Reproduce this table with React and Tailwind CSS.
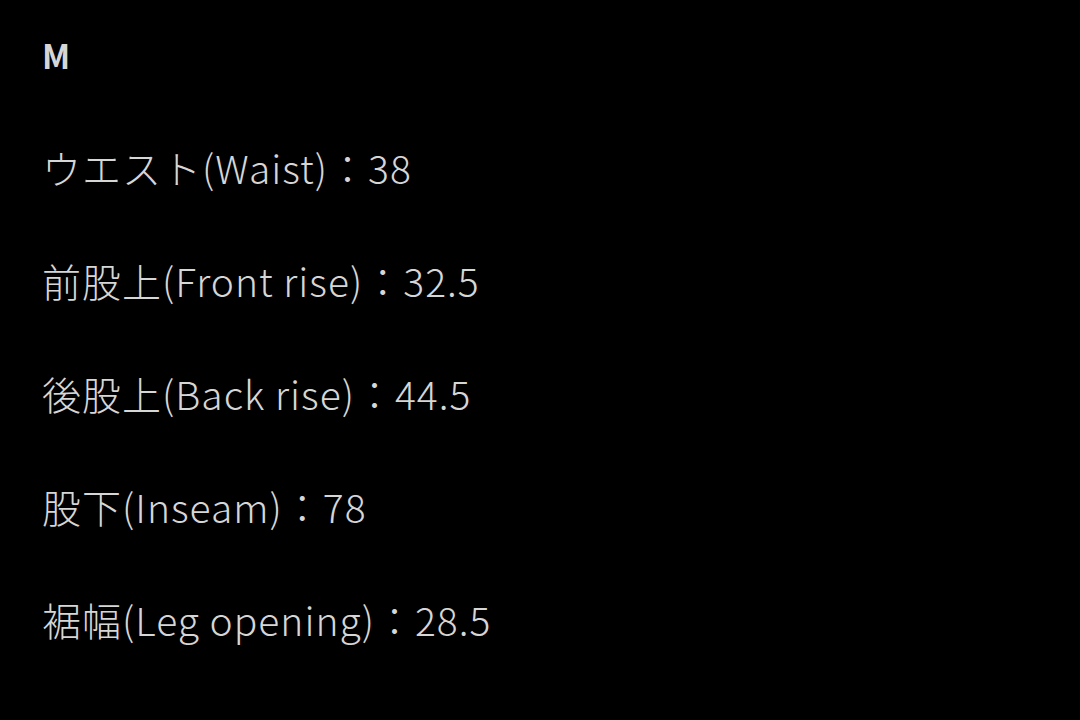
export default function App() {
  const rows = [
    "ウエスト(Waist)：38",
    "前股上(Front rise)：32.5",
    "後股上(Back rise)：44.5",
    "股下(Inseam)：78",
    "裾幅(Leg opening)：28.5",
  ];
  return (
    <div
      className="w-[1080px] h-[720px] bg-black text-[#d6d6d6] pl-[42px] overflow-hidden"
      style={{ fontFamily: '"Noto Sans CJK JP", "Noto Sans", sans-serif' }}
    >
      <div className="h-[111px] flex items-center text-[33px] font-bold">M</div>
      {rows.map((r) => (
        <div key={r} className="h-[113px] flex items-center text-[39px] font-light tracking-[1px] whitespace-nowrap">
          {r}
        </div>
      ))}
    </div>
  );
}
